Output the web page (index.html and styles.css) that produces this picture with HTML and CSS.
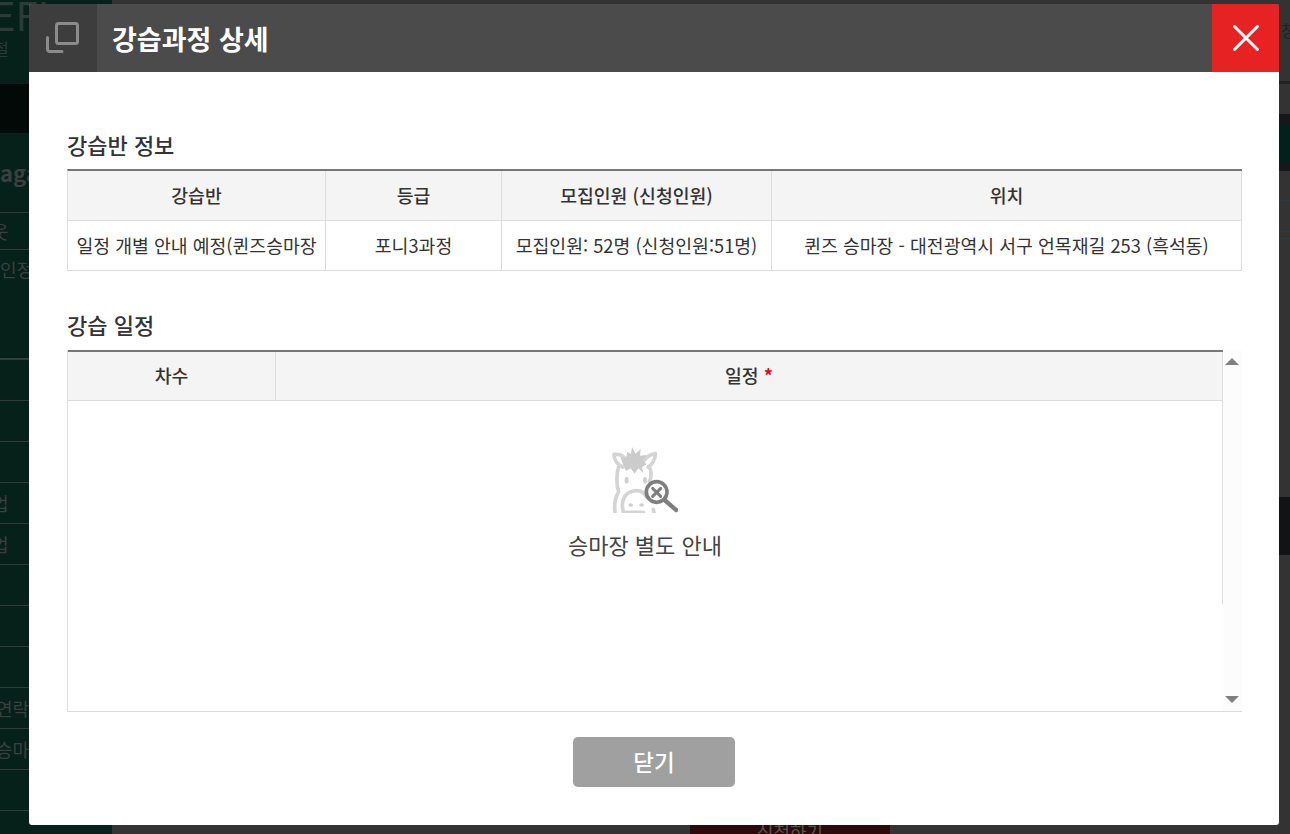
FILE: index.html
```html
<!DOCTYPE html>
<html lang="ko">
<head>
<meta charset="utf-8">
<title>강습과정 상세</title>
<link rel="stylesheet" href="styles.css">
</head>
<body>
<div class="page">
  <aside class="sidebar">
    <div class="brand"><span class="brand-mark">EFI</span><span class="brand-sub">철</span></div>
    <div class="band"></div>
    <div class="nav-title">aga</div>
    <div class="nav-row nav-short nav-cut">웃</div>
    <div class="nav-row nav-tall">인정보</div>
    <div class="nav-row"></div>
    <div class="nav-row"></div>
    <div class="nav-row"></div>
    <div class="nav-row nav-cut">업</div>
    <div class="nav-row nav-cut">업</div>
    <div class="nav-row"></div>
    <div class="nav-row"></div>
    <div class="nav-row"></div>
    <div class="nav-row nav-half">연락처</div>
    <div class="nav-row nav-half">승마면</div>
    <div class="nav-row"></div>
    <div class="nav-row"></div>
  </aside>
  <main class="backdrop">
    <div class="top-bar"><span>창</span></div>
    <div class="dark-band"><div class="teal-band"></div></div>
    <div class="thin-rows">
      <div class="thin-row thin-a"></div>
      <div class="thin-row thin-b"></div>
      <div class="thin-row thin-c"></div>
    </div>
    <div class="black-band"></div>
    <div class="cta">신청하기</div>
  </main>
</div>

<section class="modal">
  <header class="modal-head">
    <div class="modal-icon">
      <svg width="68" height="68" viewBox="0 0 68 68" fill="none" stroke="#8b8b8b" stroke-width="3" stroke-linecap="round" stroke-linejoin="round">
        <rect x="27.5" y="19.5" width="21" height="20" rx="2"/>
        <path d="M18.5 33.5V45a2.5 2.5 0 0 0 2.500 2.500H33"/>
      </svg>
    </div>
    <h1 class="modal-title">강습과정 상세</h1>
    <button class="modal-close" type="button" aria-label="닫기">
      <svg width="26" height="26" viewBox="0 0 26 26" fill="none" stroke="#fff" stroke-width="3" stroke-linecap="round">
        <path d="M1.500 1.500L24.500 24.500M24.500 1.500L1.500 24.500"/>
      </svg>
    </button>
  </header>

  <div class="modal-body">
    <h2 class="section-title">강습반 정보</h2>
    <table class="info-table">
      <colgroup>
        <col class="col-a"><col class="col-b"><col class="col-c"><col class="col-d">
      </colgroup>
      <thead>
        <tr><th>강습반</th><th>등급</th><th>모집인원 (신청인원)</th><th>위치</th></tr>
      </thead>
      <tbody>
        <tr>
          <td>일정 개별 안내 예정(퀸즈승마장</td>
          <td>포니3과정</td>
          <td>모집인원: 52명 (신청인원:51명)</td>
          <td>퀸즈 승마장 - 대전광역시 서구 언목재길 253 (흑석동)</td>
        </tr>
      </tbody>
    </table>

    <h2 class="section-title section-second">강습 일정</h2>
    <div class="schedule">
      <div class="schedule-main">
        <table class="schedule-table">
          <colgroup><col class="col-round"><col></colgroup>
          <thead>
            <tr><th>차수</th><th>일정 <span class="required">*</span></th></tr>
          </thead>
        </table>
        <div class="empty">
          <svg class="empty-icon" width="66" height="66" viewBox="0 0 66 66" fill="none" stroke-linecap="round" stroke-linejoin="round">
            <g transform="translate(-22 -16) scale(.3333)">
              <g stroke="#d4d4d4" stroke-width="11">
                <path d="M98 108C84 102 73 88 72 70C90 68 104 76 112 92"/>
                <path d="M160 92C170 76 180 70 196 68C196 86 186 102 174 108"/>
                <path d="M86 108C78 130 80 165 86 182C76 200 72 225 75 245"/>
                <path d="M178 108C185 122 184 140 178 152"/>
                <path d="M100 242C92 215 100 186 130 180C150 176 162 184 168 196"/>
                <path d="M108 244H160M190 235L192 245"/>
              </g>
              <path fill="#cbcbcb" d="M98 98L92 78L108 82L112 62L123 70L126 48L137 68L152 54L150 74L170 72L158 90L170 100L156 108L160 126L145 112L134 128L122 112L108 120Z"/>
              <g fill="#d0d0d0">
                <ellipse cx="110" cy="148" rx="6" ry="10"/>
                <ellipse cx="165" cy="148" rx="6" ry="10"/>
                <ellipse cx="122" cy="222" rx="7" ry="5"/>
                <ellipse cx="155" cy="222" rx="7" ry="5"/>
              </g>
              <circle cx="200" cy="183" r="31" fill="#fff" stroke="#7f7f7f" stroke-width="11"/>
              <path d="M225 208L258 237" stroke="#7f7f7f" stroke-width="13"/>
              <path d="M188 172L212 196M212 172L188 196" stroke="#7f7f7f" stroke-width="9"/>
            </g>
          </svg>
          <p class="empty-text">승마장 별도 안내</p>
        </div>
      </div>
      <div class="scrollbar">
        <span class="arrow-up"></span>
        <span class="arrow-down"></span>
      </div>
    </div>

    <div class="modal-actions">
      <button class="btn-close" type="button">닫기</button>
    </div>
  </div>
</section>
</body>
</html>
```
FILE: styles.css
```css
* { box-sizing: border-box; }

html, body {
  margin: 0;
  height: 100%;
  overflow: hidden;
  background: #333;
  font-family: "Noto Sans CJK KR", "Noto Sans", sans-serif;
  color: #333;
}

.page {
  display: flex;
  height: 834px;
  overflow: hidden;
}

/* dimmed page behind the dialog */
.sidebar {
  flex: 0 0 112px;
  background: #06201a;
  color: #3a403d;
  overflow: hidden;
}
.brand {
  height: 84px;
  display: flex;
  flex-direction: column;
}
.brand-mark {
  font-size: 40px;
  line-height: 40px;
  margin-top: -6px;
  margin-left: -8px;
  color: #2c3b36;
}
.brand-sub {
  font-size: 16px;
  line-height: 20px;
  margin-top: 4px;
  margin-left: -6px;
  color: #2c3b36;
}
.band { height: 49px; background: #010a07; }
.nav-title {
  height: 79px;
  padding-top: 24px;
  font-size: 22px;
  line-height: 30px;
  font-weight: 700;
}
.nav-row {
  height: 41px;
  border-top: 1px solid #333a37;
  font-size: 18px;
  line-height: 40px;
  white-space: nowrap;
}
.nav-short { height: 37px; line-height: 36px; }
.nav-tall { height: 110px; line-height: 38px; border-bottom: 1px solid #3a403d; }
.nav-cut { text-indent: -8px; }
.nav-half { text-indent: -4px; }

.backdrop {
  flex: 1;
  min-width: 0;
  background: #333;
  display: flex;
  flex-direction: column;
}
.backdrop > * { flex-shrink: 0; }
.top-bar {
  height: 84px;
  border-bottom: 3px solid #222;
  display: flex;
  justify-content: flex-end;
  align-items: flex-start;
  padding-top: 17px;
  font-size: 16px;
  line-height: 26px;
  color: #222;
  margin-right: -6px;
}
.dark-band {
  height: 57px;
  margin-top: 30px;
  padding-top: 10px;
  background: #151818;
}
.teal-band { height: 39px; background: #02211c; }
.thin-rows { margin-top: 29px; }
.thin-row { border-top: 1px solid #2b3a44; }
.thin-a { height: 31px; }
.thin-b { height: 7px; }
.thin-c { height: 259px; }
.black-band { height: 58px; background: #111314; }
.cta {
  width: 200px;
  height: 40px;
  margin: 270px 0 0 578px;
  background: #2a0a0b;
  color: #555;
  text-align: center;
  font-size: 18px;
  line-height: 12px;
}

/* dialog */
.modal {
  position: absolute;
  left: 29px;
  top: 4px;
  width: 1250px;
  height: 821px;
  background: #fff;
  border-radius: 3px;
  overflow: hidden;
}
.modal-head {
  display: flex;
  align-items: center;
  height: 68px;
  background: #4b4b4b;
}
.modal-icon {
  flex: 0 0 68px;
  height: 68px;
  background: #3d3d3d;
}
.modal-icon svg { display: block; }
.modal-title {
  flex: 1;
  margin: 2px 0 0 15px;
  font-size: 27px;
  line-height: 40px;
  font-weight: 700;
  color: #fff;
}
.modal-close {
  flex: 0 0 67px;
  height: 68px;
  padding: 0;
  border: 0;
  background: #e62222;
  display: flex;
  align-items: center;
  justify-content: center;
}
.modal-close svg { display: block; }

.modal-body { padding: 59px 37px 0 38px; }

.section-title {
  margin: 0 0 12px;
  font-size: 22px;
  line-height: 26px;
  font-weight: 500;
  color: #333;
}
.section-second { margin: 40px 0 13px; }

table {
  width: 100%;
  table-layout: fixed;
  border-collapse: separate;
  border-spacing: 0;
  font-size: 18.3px;
}
th, td {
  padding: 0 0 2px;
  text-align: center;
  white-space: nowrap;
  overflow: hidden;
  border-right: 1px solid #ddd;
  border-bottom: 1px solid #ddd;
}
th {
  height: 50px;
  background: #f4f4f4;
  font-weight: 500;
  color: #333;
}
td { height: 50px; color: #333; }

.info-table {
  width: 1175px;
  border-top: 2px solid #777;
  border-left: 1px solid #ddd;
}
.col-a { width: 258px; }
.col-b { width: 176px; }
.col-c { width: 270px; }
.col-d { width: 470px; }

.schedule {
  display: flex;
  width: 1175px;
  height: 362px;
  border-bottom: 1px solid #ddd;
}
.schedule-main {
  flex: 0 0 1156px;
  border-left: 1px solid #ddd;
}
.schedule-table { border-top: 2px solid #777; }
.col-round { width: 208px; }
.schedule-table th { height: 49px; }
.required { color: #e60012; font-weight: 700; }

.empty {
  height: 203px;
  border-right: 1px solid #ddd;
  padding-top: 46px;
  display: flex;
  flex-direction: column;
  align-items: center;
}
.empty-icon { display: block; filter: blur(.5px); }
.empty-text {
  margin: 15px 0 0;
  font-size: 22px;
  line-height: 32px;
  color: #444;
}

.scrollbar {
  flex: 1;
  background: #fcfcfc;
  display: flex;
  flex-direction: column;
  justify-content: space-between;
  align-items: center;
  padding: 8px 1px 8px 0;
}
.arrow-up {
  border-left: 7px solid transparent;
  border-right: 7px solid transparent;
  border-bottom: 7px solid #808080;
}
.arrow-down {
  border-left: 7px solid transparent;
  border-right: 7px solid transparent;
  border-top: 7px solid #808080;
}

.modal-actions {
  display: flex;
  justify-content: center;
  margin: 25px 1px 0 0;
}
.btn-close {
  width: 162px;
  height: 50px;
  padding: 0 0 2px;
  border: 0;
  border-radius: 5px;
  background: #a0a0a0;
  color: #fff;
  font-family: inherit;
  font-size: 22.500px;
  font-weight: 500;
}
```
